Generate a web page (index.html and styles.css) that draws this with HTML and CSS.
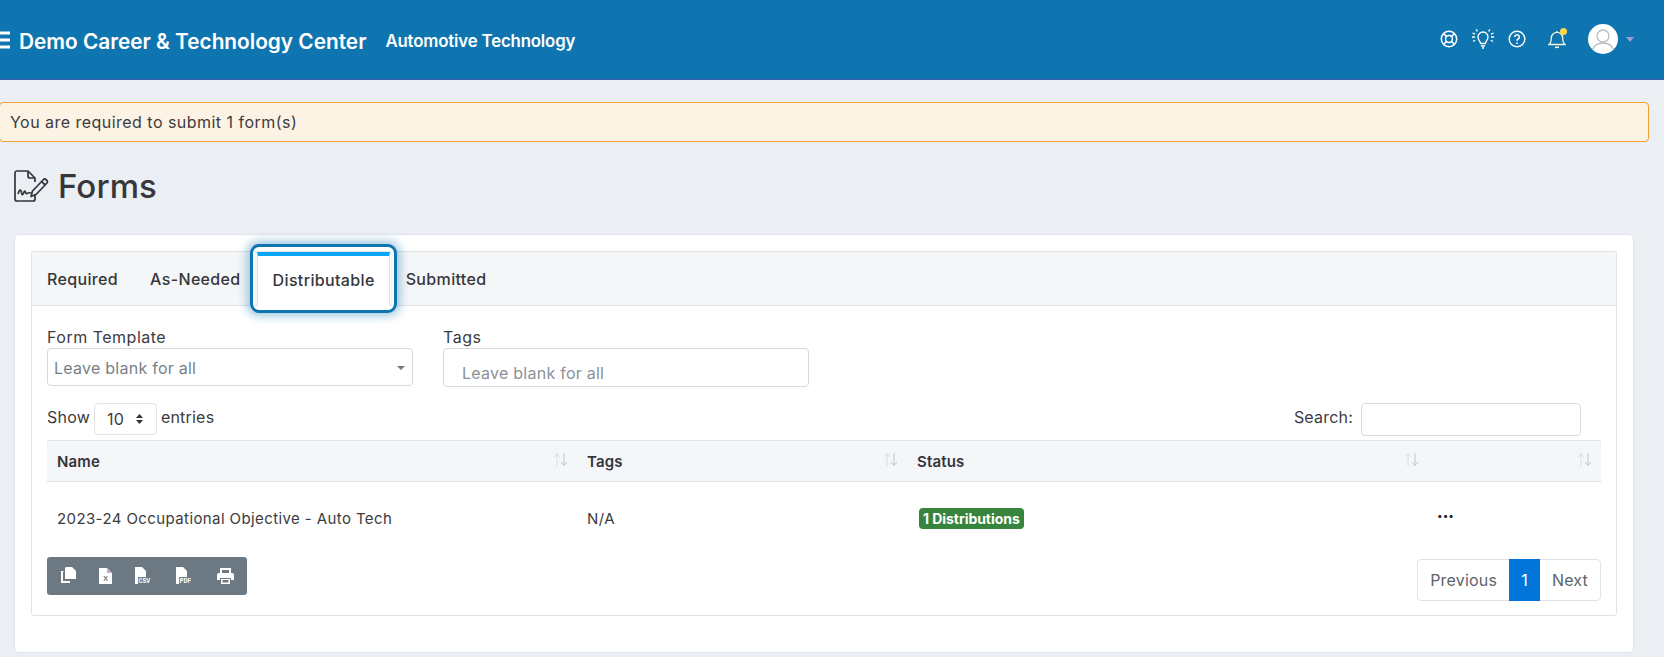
FILE: index.html
```html
<!DOCTYPE html>
<html lang="en">
<head>
<meta charset="utf-8">
<title>Forms</title>
<link rel="stylesheet" href="styles.css">
</head>
<body>
<header class="topbar">
  <div class="brand">
    <svg class="burger" width="10" height="18" viewBox="0 0 10 18"><path d="M0 2h10M0 9h10M0 16h10" stroke="#fff" stroke-width="3"/></svg>
    <span class="org">Demo Career &amp; Technology Center</span>
    <span class="dept">Automotive Technology</span>
  </div>
  <div class="tools">
    <svg class="tool ring" width="18" height="18" viewBox="0 0 18 18" fill="none" stroke="#fff" stroke-width="1.5"><circle cx="9" cy="9" r="7.7"/><circle cx="9" cy="9" r="3.4"/><path d="M3.6 3.6l3 3M14.4 3.6l-3 3M3.6 14.4l3-3M14.4 14.4l-3-3"/></svg>
    <svg class="tool bulb" width="22" height="20" viewBox="0 0 22 20" fill="none" stroke="#fff" stroke-width="1.3"><path d="M8.6 14.5c0-2-2.6-3.200-2.600-6.500a5 5 0 0 1 10 0c0 3.300-2.600 4.500-2.600 6.500z"/><path d="M9 17h4M10 19h2M0.500 4l2.500 1.200M21.500 4l-2.500 1.200M0 8h3M19 8h3M1 12.500l2.200-1.200M21 12.500l-2.200-1.200M4 0.500l1.500 1.800M18 0.500l-1.500 1.800"/></svg>
    <svg class="tool help" width="18" height="18" viewBox="0 0 18 18" fill="none" stroke="#fff" stroke-width="1.4"><circle cx="9" cy="9" r="7.800"/><path d="M6.700 7a2.300 2.300 0 1 1 3.500 2c-.8.500-1.200.9-1.200 1.800" stroke-width="1.500"/><path d="M9 12.400v1.500" stroke-width="1.600"/></svg>
    <span class="bell-wrap">
      <svg width="18" height="20" viewBox="0 0 18 20" fill="none" stroke="#f3f7e0" stroke-width="1.300"><path d="M1 15.500c2-1.500 2.300-3.500 2.300-6.500a5.700 5.700 0 0 1 11.400 0c0 3 .3 5 2.300 6.500z"/><path d="M7 18.300h4" stroke-width="1.600"/><path d="M9 2v1.200"/></svg>
      <span class="bell-dot"></span>
    </span>
    <svg class="avatar" width="30" height="30" viewBox="0 0 30 30"><circle cx="15" cy="15" r="15" fill="#fff"/><circle cx="15" cy="12" r="6" fill="none" stroke="#b9bcc1" stroke-width="1.300"/><path d="M4.500 25.500c2-5 6-6.500 10.500-6.500s8.500 1.500 10.500 6.500" fill="none" stroke="#b9bcc1" stroke-width="1.300"/></svg>
    <span class="caret"></span>
  </div>
</header>

<div class="alert">You are required to submit 1 form(s)</div>

<div class="page-title">
  <svg width="36" height="32" viewBox="0 0 36 32" fill="none" stroke="#33353a" stroke-width="1.700" stroke-linejoin="round"><path d="M21 24v5a2 2 0 0 1-2 2H3a2 2 0 0 1-2-2V3a2 2 0 0 1 2-2h11l7 7v4"/><path d="M14 1v5a2 2 0 0 0 2 2h5"/><path d="M4 24c1.500-5 3-5 3.500-1.500s1.500 2.500 2.500-.5 1.500 2.500 3 1.500 2.500-1 4-.5"/><path d="M17 26.500l1.500-5.500 11-11.500c1.500-1.500 5 1.500 3.500 3.500L22 24.500z"/><path d="M27.500 11.500l3.800 3.500"/></svg>
  <h1>Forms</h1>
</div>

<main class="card">
  <div class="tabbox">
    <nav class="tabs">
      <a class="tab">Required</a>
      <a class="tab">As-Needed</a>
      <a class="tab active">Distributable</a>
      <a class="tab">Submitted</a>
    </nav>
    <section class="panel">
      <div class="filters">
        <div class="field">
          <label>Form Template</label>
          <div class="select2"><span>Leave blank for all</span><i class="sel-caret"></i></div>
        </div>
        <div class="field">
          <label>Tags</label>
          <div class="tagbox"><span>Leave blank for all</span></div>
        </div>
      </div>
      <div class="dt-top">
        <div class="dt-len">Show
          <span class="len-select">10
            <svg width="9" height="12" viewBox="0 0 9 12"><path d="M4.500 1l3.500 4H1zM4.500 11L1 7h7z" fill="#333"/></svg>
          </span>
          entries</div>
        <div class="dt-search">Search: <span class="search-box"></span></div>
      </div>
      <table class="dt">
        <colgroup><col class="c1"><col class="c2"><col class="c3"><col class="c4"></colgroup>
        <thead>
          <tr>
            <th>Name<svg class="sort" width="15" height="15" viewBox="0 0 15 15"><path d="M4 14V2M1 5l3-3.500L7 5" stroke="#d8dce0"/><path d="M11 1v12M8 10l3 3.500 3-3.500" stroke="#bfc4c9"/></svg></th>
            <th>Tags<svg class="sort" width="15" height="15" viewBox="0 0 15 15"><path d="M4 14V2M1 5l3-3.500L7 5" stroke="#d8dce0"/><path d="M11 1v12M8 10l3 3.500 3-3.500" stroke="#bfc4c9"/></svg></th>
            <th>Status<svg class="sort" width="15" height="15" viewBox="0 0 15 15"><path d="M4 14V2M1 5l3-3.500L7 5" stroke="#d8dce0"/><path d="M11 1v12M8 10l3 3.500 3-3.500" stroke="#bfc4c9"/></svg></th>
            <th><svg class="sort" width="15" height="15" viewBox="0 0 15 15"><path d="M4 14V2M1 5l3-3.500L7 5" stroke="#d8dce0"/><path d="M11 1v12M8 10l3 3.500 3-3.500" stroke="#bfc4c9"/></svg></th>
          </tr>
        </thead>
        <tbody>
          <tr>
            <td>2023-24 Occupational Objective - Auto Tech</td>
            <td>N/A</td>
            <td><span class="badge">1 Distributions</span></td>
            <td class="more">•••</td>
          </tr>
        </tbody>
      </table>
      <div class="dt-bottom">
        <div class="exports">
          <svg width="16" height="17" viewBox="0 0 16 17"><path d="M6 0h6l4 4v8H5V1z" fill="#fff"/><path d="M4 4H1v12h9v-2H3V5z" fill="#fff"/></svg>
          <svg width="13" height="16" viewBox="0 0 13 16"><path d="M0 0h8l5 5v11H0z" fill="#fff"/><path d="M8 0v5h5" fill="#c9a8d8"/><text x="6.500" y="13" class="x">X</text></svg>
          <svg width="18" height="17" viewBox="0 0 18 17"><path d="M0 0h7l4 4v13H0z" fill="#fff"/><path d="M3 10h15v7H3z" fill="#6c7983"/><text x="3.500" y="16" class="mini">CSV</text></svg>
          <svg width="18" height="17" viewBox="0 0 18 17"><path d="M0 0h7l4 4v13H0z" fill="#fff"/><path d="M3 10h15v7H3z" fill="#6c7983"/><text x="3.500" y="16" class="mini">PDF</text></svg>
          <svg width="17" height="16" viewBox="0 0 17 16"><path d="M3 5V0h11v5h-2V2H5v3z" fill="#fff"/><path d="M2 5h13a2 2 0 0 1 2 2v5h-3v-2H3v2H0V7a2 2 0 0 1 2-2z" fill="#fff"/><path d="M4 11h9v5H4z" fill="#fff"/><path d="M5.500 12h6v2.500h-6z" fill="#6c7983"/></svg>
        </div>
        <div class="pager">
          <span class="pg">Previous</span>
          <span class="pg on">1</span>
          <span class="pg">Next</span>
        </div>
      </div>
    </section>
  </div>
</main>
</body>
</html>
```
FILE: styles.css
```css
* { box-sizing: border-box; }
html, body { margin: 0; height: 657px; overflow: hidden; }
body {
  background: #ebeef3;
  font-family: Inter, "Open Sans", sans-serif;
  font-size: 16px;
  color: #3b3b40;
}
.topbar {
  height: 80px;
  background: #0f75b0;
  border-bottom: 1px solid #3f5aa5;
  display: flex;
  align-items: center;
  justify-content: space-between;
  color: #fff;
}
.brand { display: flex; align-items: center; padding-top: 3px; }
.burger { display: block; margin-top: -2px; }
.org { margin-left: 9px; font-size: 20.800px; font-weight: 600; letter-spacing: 0; }
.dept { margin-left: 19px; font-size: 16.800px; font-weight: 600; letter-spacing: -.15px; }
.tools { display: flex; align-items: center; padding-right: 30px; padding-bottom: 1px; }
.tool { display: block; }
.ring { margin-right: 14px; }
.bulb { margin-right: 14px; }
.help { margin-right: 22px; }
.bell-wrap { position: relative; display: block; width: 18px; height: 20px; margin-right: 22px; }
.bell-wrap svg { display: block; }
.bell-dot { position: absolute; top: -1px; right: -1px; width: 7px; height: 7px; border-radius: 50%; background: #ffd54a; }
.avatar { display: block; }
.caret { margin-left: 8px; width: 0; height: 0; border: 4px solid transparent; border-top: 5px solid #9a9fd0; border-bottom: 0; }

.alert {
  margin: 22px 15px 0 -1px;
  height: 40px;
  padding: 0 10px;
  display: flex;
  align-items: center;
  background: #fdf3e4;
  border: 1px solid #ef9f33;
  border-radius: 4px;
  font-size: 16px;
  letter-spacing: .47px;
}
.page-title { display: flex; align-items: center; gap: 8px; margin: 28px 0 0 14px; height: 32px; }
.page-title svg { display: block; }
.page-title h1 { margin: 0; font-size: 33px; font-weight: 500; letter-spacing: .1px; color: #35373b; }

.card {
  margin: 32px 30px 0 14px;
  height: 419px;
  background: #fff;
  border: 1px solid #e2e6ea;
  border-radius: 5px;
  padding: 16px;
}
.tabbox { height: 365px; border: 1px solid #dfe4e9; border-radius: 3px; display: flex; flex-direction: column; }
.tabs {
  height: 54px;
  background: #f5f6f8;
  display: flex;
  border-bottom: 1px solid #dfe4e9;
}
.tab {
  position: relative;
  display: flex;
  align-items: center;
  padding: 0 16px 0 15px;
  font-size: 16px;
  font-weight: 500;
  letter-spacing: .35px;
  color: #35373b;
}
.tab + .tab { padding-left: 16px; }
.tab.active {
  background: #fff;
  border-top: 4px solid #0aa5f5;
  padding: 0 14px 2px 15px;
  height: 54px;
  border-left: 1px solid #dfe4e9;
  border-right: 1px solid #dfe4e9;
  z-index: 1;
}
.tab.active::after {
  content: "";
  position: absolute;
  inset: -12px -8px -7px -8px;
  border: 3px solid #0f75b0;
  border-radius: 9px;
  box-shadow: inset 0 0 0 1px #fff, 0 0 10px 3px rgba(15, 117, 176, .4);
  pointer-events: none;
}
.panel { flex: 1; padding: 19px 15px 0; }
.filters { display: flex; gap: 30px; }
.field { width: 366px; }
.field label { display: block; height: 23px; line-height: 24px; letter-spacing: .5px; }
.select2 {
  height: 38px;
  border: 1px solid #d5d9df;
  border-radius: 4px;
  display: flex;
  align-items: center;
  justify-content: space-between;
  padding: 1px 6px 0;
  color: #7a7f87;
  letter-spacing: .25px;
}
.sel-caret { width: 0; height: 0; border: 4px solid transparent; border-top: 4px solid #777; border-bottom: 0; margin-right: 1px; }
.tagbox {
  height: 39px;
  border: 1px solid #d5d9df;
  border-radius: 4px;
  padding: 14px 0 0 18px;
  color: #8a9199;
  line-height: 20px;
  letter-spacing: .25px;
}
.dt-top { display: flex; justify-content: space-between; margin-top: 16px; height: 37px; }
.dt-len { display: flex; align-items: flex-start; gap: 4px; line-height: 28px; letter-spacing: .2px; }
.len-select {
  width: 63px;
  height: 32px;
  border: 1px solid #dfe4e9;
  border-radius: 4px;
  display: flex;
  align-items: center;
  justify-content: space-between;
  padding: 0 12px;
}
.len-select svg { display: block; }
.dt-search { display: flex; align-items: flex-start; gap: 8px; line-height: 28px; margin-right: 20px; letter-spacing: .2px; }
.search-box { display: block; width: 220px; height: 33px; border: 1px solid #d5dde4; border-radius: 4px; }

.dt { width: 100%; border-collapse: collapse; table-layout: fixed; }
.c1 { width: 530px; }
.c2 { width: 330px; }
.c3 { width: 521px; }
.dt th {
  position: relative;
  height: 41px;
  background: #f5f6f8;
  border-top: 1px solid #dfe4e9;
  border-bottom: 1px solid #dfe4e9;
  text-align: left;
  padding: 0 10px;
  font-size: 15px;
  font-weight: 600;
  letter-spacing: .15px;
  color: #33353b;
}
.sort { position: absolute; right: 9px; top: 11px; fill: none; }
.dt td { height: 74px; padding: 0 10px; font-size: 15px; letter-spacing: .4px; vertical-align: middle; }
.badge {
  display: inline-block;
  height: 21px;
  line-height: 21px;
  margin-left: 2px;
  padding: 0 4px;
  border-radius: 4px;
  background: #36843d;
  color: #fff;
  font-size: 14px;
  font-weight: 700;
  letter-spacing: -.05px;
}
.dt td.more { padding: 0 0 8px 9px; font-size: 10px; letter-spacing: 0; color: #222; }
.dt-bottom { display: flex; justify-content: space-between; align-items: flex-start; margin-top: 1px; }
.exports {
  width: 200px;
  height: 38px;
  background: #6c7983;
  border-radius: 3px;
  display: flex;
  align-items: center;
  justify-content: space-between;
  padding: 0 13px;
}
.exports svg { display: block; }
.exports .x { font: 700 7px "Liberation Sans", sans-serif; fill: #6c7983; text-anchor: middle; }
.exports .mini { font: 700 6.500px "Liberation Mono", monospace; fill: #fff; }
.pager {
  margin-top: 2px;
  display: flex;
  height: 42px;
  border: 1px solid #dfe2e6;
  border-radius: 4px;
  color: #5d636b;
}
.pg { display: flex; align-items: center; padding: 0 12px; letter-spacing: .2px; }
.pg.on { margin: -1px 0; background: #0275d8; color: #fff; padding: 0 12px; }
```
